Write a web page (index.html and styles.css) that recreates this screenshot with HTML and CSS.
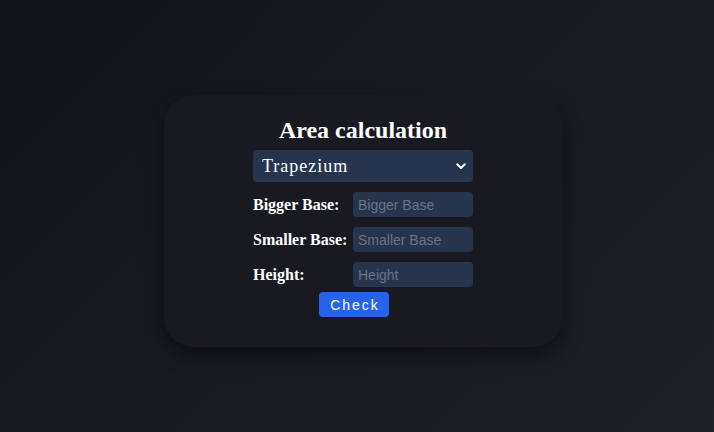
FILE: index.html
```html
<!DOCTYPE html>
<html>
<head>
<meta charset="utf-8">
<link rel="stylesheet" href="styles.css">
</head>
<body>
<div class="page">
  <div class="card">
    <h2 class="title">Area calculation</h2>
    <div class="select-wrap">
      <select class="shape">
        <option>Trapezium</option>
      </select>
      <svg class="chev" width="10" height="7" viewBox="0 0 10 7"><path d="M1.2 1.3 L5 5 L8.8 1.3" fill="none" stroke="#fff" stroke-width="2" stroke-linecap="round" stroke-linejoin="round"/></svg>
    </div>
    <div class="row"><label class="lbl">Bigger Base:</label><input class="field" placeholder="Bigger Base"></div>
    <div class="row"><label class="lbl">Smaller Base:</label><input class="field" placeholder="Smaller Base"></div>
    <div class="row"><label class="lbl">Height:</label><input class="field" placeholder="Height"></div>
    <button class="btn">Check</button>
  </div>
</div>
</body>
</html>
```
FILE: styles.css
```css
html, body {
  margin: 0;
  height: 100%;
}
body {
  background: linear-gradient(135deg, #14151a 0%, #1a1b21 50%, #1f2028 100%);
  font-family: "Liberation Serif", serif;
}
.page {
  height: 432px;
  display: flex;
  justify-content: center;
  padding-top: 95px;
  padding-left: 12px;
  box-sizing: border-box;
}
.card {
  width: 399px;
  height: 252px;
  box-sizing: border-box;
  background: #191a21;
  border-radius: 30px;
  box-shadow: 0 9px 18px rgba(0, 0, 0, 0.5);
  display: flex;
  flex-direction: column;
  align-items: center;
  padding-top: 20px;
}
.title {
  margin: 0;
  color: #fff;
  font-size: 24px;
  line-height: 30px;
  font-weight: bold;
}
.select-wrap {
  position: relative;
  margin-top: 5px;
  width: 220px;
  height: 32px;
}
.shape {
  appearance: none;
  -webkit-appearance: none;
  width: 220px;
  height: 32px;
  border: none;
  border-radius: 4px;
  background: #27344d;
  color: #fff;
  font-family: "Liberation Serif", serif;
  font-size: 18px;
  letter-spacing: 1px;
  padding: 0 0 0 9px;
  outline: none;
}
.chev {
  position: absolute;
  right: 7px;
  top: 13px;
}
.row {
  width: 220px;
  display: flex;
  align-items: center;
  margin-top: 10px;
}
.lbl {
  width: 100px;
  color: #fff;
  font-weight: bold;
  font-size: 16px;
}
.field {
  width: 120px;
  height: 25px;
  box-sizing: border-box;
  border: none;
  border-radius: 4px;
  background: #27344d;
  color: #fff;
  font-family: "Liberation Sans", Arial, sans-serif;
  font-size: 14px;
  padding: 0 5px;
  outline: none;
}
.field::placeholder {
  color: #6b7383;
}
.btn {
  margin-top: 5px;
  margin-right: 18px;
  width: 70px;
  height: 25px;
  border: none;
  border-radius: 4px;
  background: #2563eb;
  color: #fff;
  font-family: "Liberation Sans", Arial, sans-serif;
  font-size: 14px;
  letter-spacing: 2px;
  padding: 0 0 0 2px;
}
```
